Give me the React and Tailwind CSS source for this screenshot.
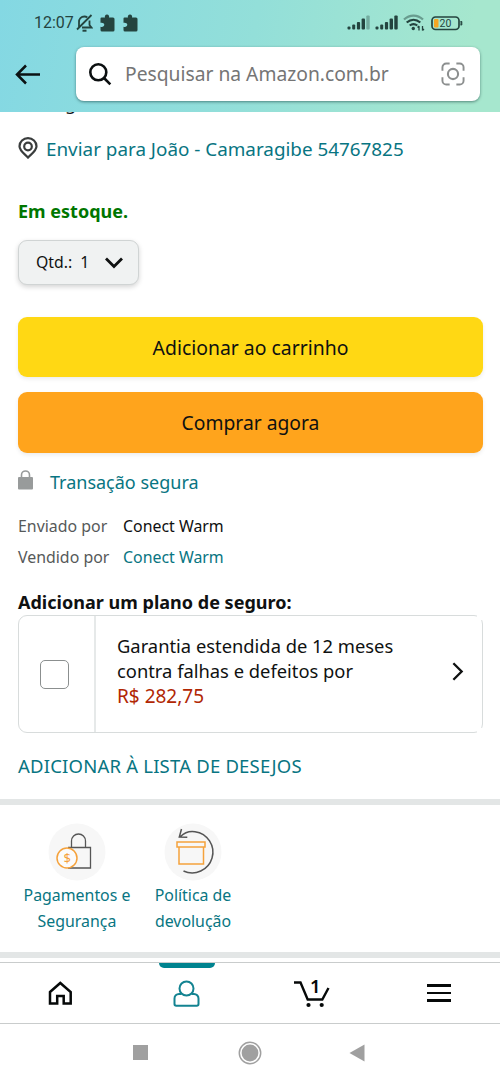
import { ChevronRight } from 'lucide-react';

const SignalBars = ({ weak }) => (
  <svg width="23" height="15" viewBox="0 0 23 15" fill="#24443f">
    <rect x="0.5" y="11.5" width="3" height="3" rx="1" />
    <rect x="5.2" y="9.5" width="3" height="5" rx="1" />
    <rect x="9.9" y="7" width="3.2" height="7.5" rx="1" />
    <rect x="14.6" y="3.5" width="3.4" height="11" rx="1" />
    <rect x="19.3" y="0.5" width="3.4" height="14" rx="1" opacity={weak ? 0.35 : 1} />
  </svg>
);

const Puzzle = () => (
  <svg width="15" height="18" viewBox="0 0 15 18" fill="#24443f">
    <path d="M1.5 3.5H5C4.4 2 5.4.5 7 .5s2.6 1.500 2 3h4A1.500 1.500 0 0 1 14.500 5v11a1.500 1.500 0 0 1-1.500 1.500H2A1.500 1.500 0 0 1 .5 16v-3.300c2 .6 3.800-.3 3.800-1.900S2.500 8.300.5 8.800V4.500a1 1 0 0 1 1-1Z" />
  </svg>
);

const StatusBar = () => (
  <div className="flex h-[46px] items-center pb-px pl-[34px] pr-[37px] text-[#24443f]">
    <span className="w-[39px] whitespace-nowrap font-[Roboto] text-[16px] leading-none">12:07</span>
    <svg className="ml-[3px]" width="17" height="18" viewBox="0 0 17 18" fill="none" stroke="#24443f" strokeWidth="1.800">
      <path d="M3 13.500V8c0-3 2-5.500 5.500-5.500 1 0 2 .3 2.800.8M13.500 6.500V11l2 2.500H6M1 15.500 15.500 1" />
      <path d="M6.500 16.700h4" strokeWidth="2" />
    </svg>
    <div className="ml-[7px] flex gap-2">
      <Puzzle />
      <Puzzle />
    </div>
    <div className="ml-auto flex items-center">
      <SignalBars weak />
      <div className="ml-[5px]">
        <SignalBars />
      </div>
      <svg className="ml-[5px]" width="22" height="17" viewBox="0 0 22 17" fill="none" stroke="#24443f" strokeWidth="2.200">
        <path d="M1 5.500c5.500-5.300 13.500-5.300 19 0" opacity=".45" />
        <path d="M3.700 8.500c4.200-3.600 9.400-3.600 13.600 0M6.700 11.500c2.600-2 5-2 7.600 0" />
        <circle cx="10.300" cy="14.500" r="1.700" fill="#24443f" stroke="none" />
        <path d="M16 16.500V12M19.500 12v4.500M14.500 13.500 16 12M21 15l-1.500 1.500" strokeWidth="1.300" />
      </svg>
      <svg className="ml-[6px]" width="32" height="16" viewBox="0 0 32 16">
        <rect x="1" y="2" width="27" height="12.500" rx="3.500" fill="none" stroke="#24443f" strokeWidth="1.700" />
        <rect x="3" y="4" width="4.500" height="8.500" rx="1" fill="#f5a623" />
        <path d="M29.500 6.500h1.300v3.500h-1.300" stroke="#24443f" fill="#24443f" />
        <text x="8.500" y="12" fill="#24443f" fontFamily="Roboto" fontSize="10.500">20</text>
      </svg>
    </div>
  </div>
);

const SearchHeader = () => (
  <header className="h-[112px] bg-linear-[100deg,#84d8e3_0%,#93dfd9_50%,#a6e7ce_92%]">
    <StatusBar />
    <div className="flex pl-[15px] pr-5 pt-px">
      <svg className="mt-[17px]" width="26" height="21" viewBox="0 0 26 21" fill="none" stroke="#0b1213" strokeWidth="2.500">
        <path d="M25 10.500H2.500M11 1.500l-9 9 9 9" />
      </svg>
      <div className="ml-[35px] flex h-[54px] flex-1 items-center rounded-lg bg-white pl-3 pr-[15px] shadow-[0_1px_3px_rgba(0,40,40,0.5)]">
        <svg width="24" height="24" viewBox="0 0 24 24" fill="none" stroke="#0b0f10" strokeWidth="2.600">
          <circle cx="10.300" cy="10.300" r="8" />
          <path d="m16 16 6.300 6.300" />
        </svg>
        <span className="ml-[13px] whitespace-nowrap text-[19.250px] text-[#757575]">Pesquisar na Amazon.com.br</span>
        <svg className="ml-auto" width="24" height="24" viewBox="0 0 25 25" fill="none" stroke="#8c8f8f" strokeWidth="2">
          <path d="M1.500 9V5.500a4 4 0 0 1 4-4H9M16 1.500h3.500a4 4 0 0 1 4 4V9M23.500 16v3.500a4 4 0 0 1-4 4H16M9 23.500H5.500a4 4 0 0 1-4-4V16" />
          <circle cx="12.500" cy="12.500" r="5.300" strokeWidth="2.200" />
        </svg>
      </div>
    </div>
  </header>
);

const PaymentsIcon = () => (
  <svg width="58" height="58" viewBox="0 0 58 58" fill="none" strokeWidth="1.300">
    <circle cx="29" cy="29" r="28.500" fill="#f7f7f7" />
    <path d="M23.500 24.500V18a7 7 0 0 1 14 0v6.500M20 24.500h22.500V45H20" stroke="#565656" />
    <circle cx="19" cy="35" r="10" fill="#fbfbfb" stroke="#f5a23c" strokeWidth="1.500" />
    <text x="19.200" y="39.500" textAnchor="middle" fill="#f5a23c" fontSize="13">$</text>
  </svg>
);

const ReturnsIcon = () => (
  <svg width="58" height="58" viewBox="0 0 58 58" fill="none" strokeWidth="1.500">
    <circle cx="29" cy="29" r="28.500" fill="#f7f7f7" />
    <path d="M16.500 13.500C21 9 26.500 8 31 8.700A20.700 20.700 0 1 1 19.500 48M17.500 6l-2.200 8 8 .3" stroke="#565656" />
    <path d="M15 24.500V41h24.500V24.500M13 19h28v5H13z" stroke="#f5a23c" />
  </svg>
);

const HelpLink = ({ icon, first, second }) => (
  <a className="flex w-[116px] flex-col items-center whitespace-nowrap text-center text-[15.900px] leading-[26px] text-[#087582]">
    {icon}
    <span className="mt-px">{first}</span>
    <span>{second}</span>
  </a>
);

const WarrantyCard = () => (
  <div className="relative flex h-[118px] rounded-[9px] border border-[#d8dcdc]">
    <div className="flex w-[77px] items-center justify-center border-r-2 border-[#e6e9e9] pr-1">
      <span className="h-[29px] w-[29px] rounded-[5px] border-[1.500px] border-[#8b8f8f]" />
    </div>
    <div className="ml-[21px] whitespace-nowrap pt-[17px] text-[18.350px] leading-[25px]">
      <p>Garantia estendida de 12 meses</p>
      <p>contra falhas e defeitos por</p>
      <p className="pt-px text-[19px] text-[#b12704]">R$ 282,75</p>
    </div>
    <ChevronRight className="ml-auto mr-[8px] mt-[39px]" size={33} strokeWidth={1.700} strokeLinecap="butt" strokeLinejoin="miter" />
    {/* Open corners on the scrolling side */}
    <span className="absolute -right-px -top-px h-[5px] w-[6px] bg-white" />
    <span className="absolute -bottom-px -right-px h-[5px] w-[6px] bg-white" />
  </div>
);

const TabBar = () => (
  <nav className="grid h-[62px] grid-cols-4 border-y border-[#c9cccc] bg-white">
    <div className="flex items-start pl-[48px] pt-[18px]">
      <svg width="25" height="25" viewBox="0 0 25 25" fill="none" stroke="#060909" strokeWidth="2.500">
        <path d="M2 11 12.300 2 22.700 11v11.500h-7V15h-6.500v7.500H2z" />
      </svg>
    </div>
    <div className="flex flex-col items-center pr-[2px]">
      <span className="h-[5px] w-[56px] rounded-b-[5px] bg-[#00838f]" />
      <svg className="mt-3" width="27" height="27" viewBox="0 0 27 27" fill="none" stroke="#138391" strokeWidth="2">
        <circle cx="13.500" cy="8.500" r="7" />
        <path d="M8.500 14H6a4.500 4.500 0 0 0-4.500 4.500V24c0 1 .7 1.700 1.700 1.700h20.600c1 0 1.700-.7 1.700-1.700v-5.500A4.500 4.500 0 0 0 21 14h-2.500" />
      </svg>
    </div>
    <div className="pl-[43px] pt-4">
      <svg className="overflow-visible" width="37" height="30" viewBox="0 0 37 30" fill="none" stroke="#060909" strokeWidth="2.400">
        <path d="M1 3.500h6.500L14.700 20.500h14.600L35.500 9" />
        <circle cx="15.500" cy="26" r="2.100" fill="#060909" stroke="none" />
        <circle cx="28.700" cy="26" r="2.100" fill="#060909" stroke="none" />
        <text x="17" y="13.500" fill="#060909" stroke="none" fontSize="18.500" fontWeight="600">1</text>
      </svg>
    </div>
    <div className="flex flex-col gap-[5px] pl-[52px] pt-[21px]">
      <span className="h-[2.500px] w-6 bg-[#060909]" />
      <span className="h-[2.500px] w-6 bg-[#060909]" />
      <span className="h-[2.500px] w-6 bg-[#060909]" />
    </div>
  </nav>
);

const SystemNav = () => (
  <div className="flex h-[59px] items-center bg-white pb-0.5 pl-[133px]">
    <span className="h-[15px] w-[15px] bg-[#a0a0a0]" />
    <svg className="ml-[90px]" width="24" height="24" viewBox="0 0 24 24" fill="none" stroke="#a0a0a0" strokeWidth="1.500">
      <circle cx="12" cy="12" r="10.700" />
      <circle cx="12" cy="12" r="8.400" fill="#a0a0a0" stroke="none" />
    </svg>
    <svg className="ml-[87px]" width="16" height="18" viewBox="0 0 16 18" fill="#a0a0a0">
      <path d="M.5 9 15.500.5v17z" />
    </svg>
  </div>
);

export default function App() {
  return (
    <div className="flex h-[1083px] w-[500px] flex-col overflow-hidden bg-white font-['Noto_Sans',sans-serif] text-[#0f1111]">
      <SearchHeader />

      <main className="flex flex-col px-[18px] pr-[17px]">
        {/* Price line scrolled under the header */}
        <div className="flex h-[8px] items-end overflow-hidden whitespace-nowrap text-[18px] leading-[26px]">
          <p className="mb-1 pl-[26px]">Paga R$ 50,00 no Pix com desconto no site</p>
        </div>

        <div className="flex h-[58px] items-center whitespace-nowrap text-[18.850px] text-[#087582]">
          <svg className="mb-[3px]" width="20" height="22" viewBox="0 0 20 22" fill="none" stroke="#3a3d3d" strokeWidth="2.200">
            <path d="M10 20.500C7.500 17.500 1.500 14 1.500 9.200a8.500 8 0 0 1 17 0c0 4.800-6 8.300-8.500 11.300Z" />
            <circle cx="10" cy="9.500" r="3.800" />
          </svg>
          <span className="ml-2">Enviar para João - Camaragibe 54767825</span>
        </div>

        <p className="mt-[20px] h-[27px] text-[18px] font-bold leading-[27px] text-[#007600]">Em estoque.</p>

        <button className="mt-[15px] flex h-[45px] w-[121px] items-center whitespace-nowrap rounded-[9px] border border-[#d0d4d4] bg-[#f0f2f2] pl-[17px] text-[15.800px] shadow-[0_2px_5px_rgba(15,17,17,0.18)]">
          <span className="pt-px">Qtd.:</span>
          <span className="ml-2 pt-px">1</span>
          <svg className="ml-4" width="18" height="12" viewBox="0 0 18 12" fill="none" stroke="#0f1111" strokeWidth="2.800">
            <path d="m1 1.500 8 8 8-8" />
          </svg>
        </button>

        <button className="mt-8 h-[60px] rounded-[9px] bg-[#ffd814] pt-px text-[19.400px] shadow-[0_2px_4px_rgba(15,17,17,0.08)]">Adicionar ao carrinho</button>
        <button className="mt-[15px] h-[61px] rounded-[9px] bg-[#ffa41c] pt-0.5 text-[19.300px] shadow-[0_2px_4px_rgba(15,17,17,0.08)]">Comprar agora</button>

        <div className="mt-[16px] flex h-[26px] items-center text-[18px] text-[#087582]">
          <svg width="15" height="20" viewBox="0 0 15 20" className="mb-1">
            <path d="M3.500 9V5a4 4 0 0 1 8 0v4" fill="none" stroke="#989b9b" strokeWidth="1.600" />
            <rect y="7" width="15" height="12.500" rx="1" fill="#989b9b" />
          </svg>
          <span className="ml-[17px]">Transação segura</span>
        </div>

        <dl className="mt-[16px] grid grid-cols-[105px_1fr] whitespace-nowrap text-[15.900px] leading-[31px]">
          <dt className="text-[#565959]">Enviado por</dt>
          <dd>Conect Warm</dd>
          <dt className="text-[#565959]">Vendido por</dt>
          <dd className="text-[#087582]">Conect Warm</dd>
        </dl>

        <h2 className="mt-[15px] h-[27px] text-[18.050px] font-bold leading-[28px]">Adicionar um plano de seguro:</h2>
        <WarrantyCard />
        <a className="mt-5 h-[26px] whitespace-nowrap text-[18.500px] leading-[26px] tracking-[0.2px] text-[#087582]">ADICIONAR À LISTA DE DESEJOS</a>
      </main>

      <div className="mt-5 h-[6px] bg-[#e3e6e6]" />
      <section className="flex h-[147px] pl-[19px] pt-[18px]">
        <HelpLink icon={<PaymentsIcon />} first="Pagamentos e" second="Segurança" />
        <HelpLink icon={<ReturnsIcon />} first="Política de" second="devolução" />
      </section>
      <div className="mb-1 h-[6px] bg-[#e3e6e6]" />

      <TabBar />
      <SystemNav />
    </div>
  );
}
